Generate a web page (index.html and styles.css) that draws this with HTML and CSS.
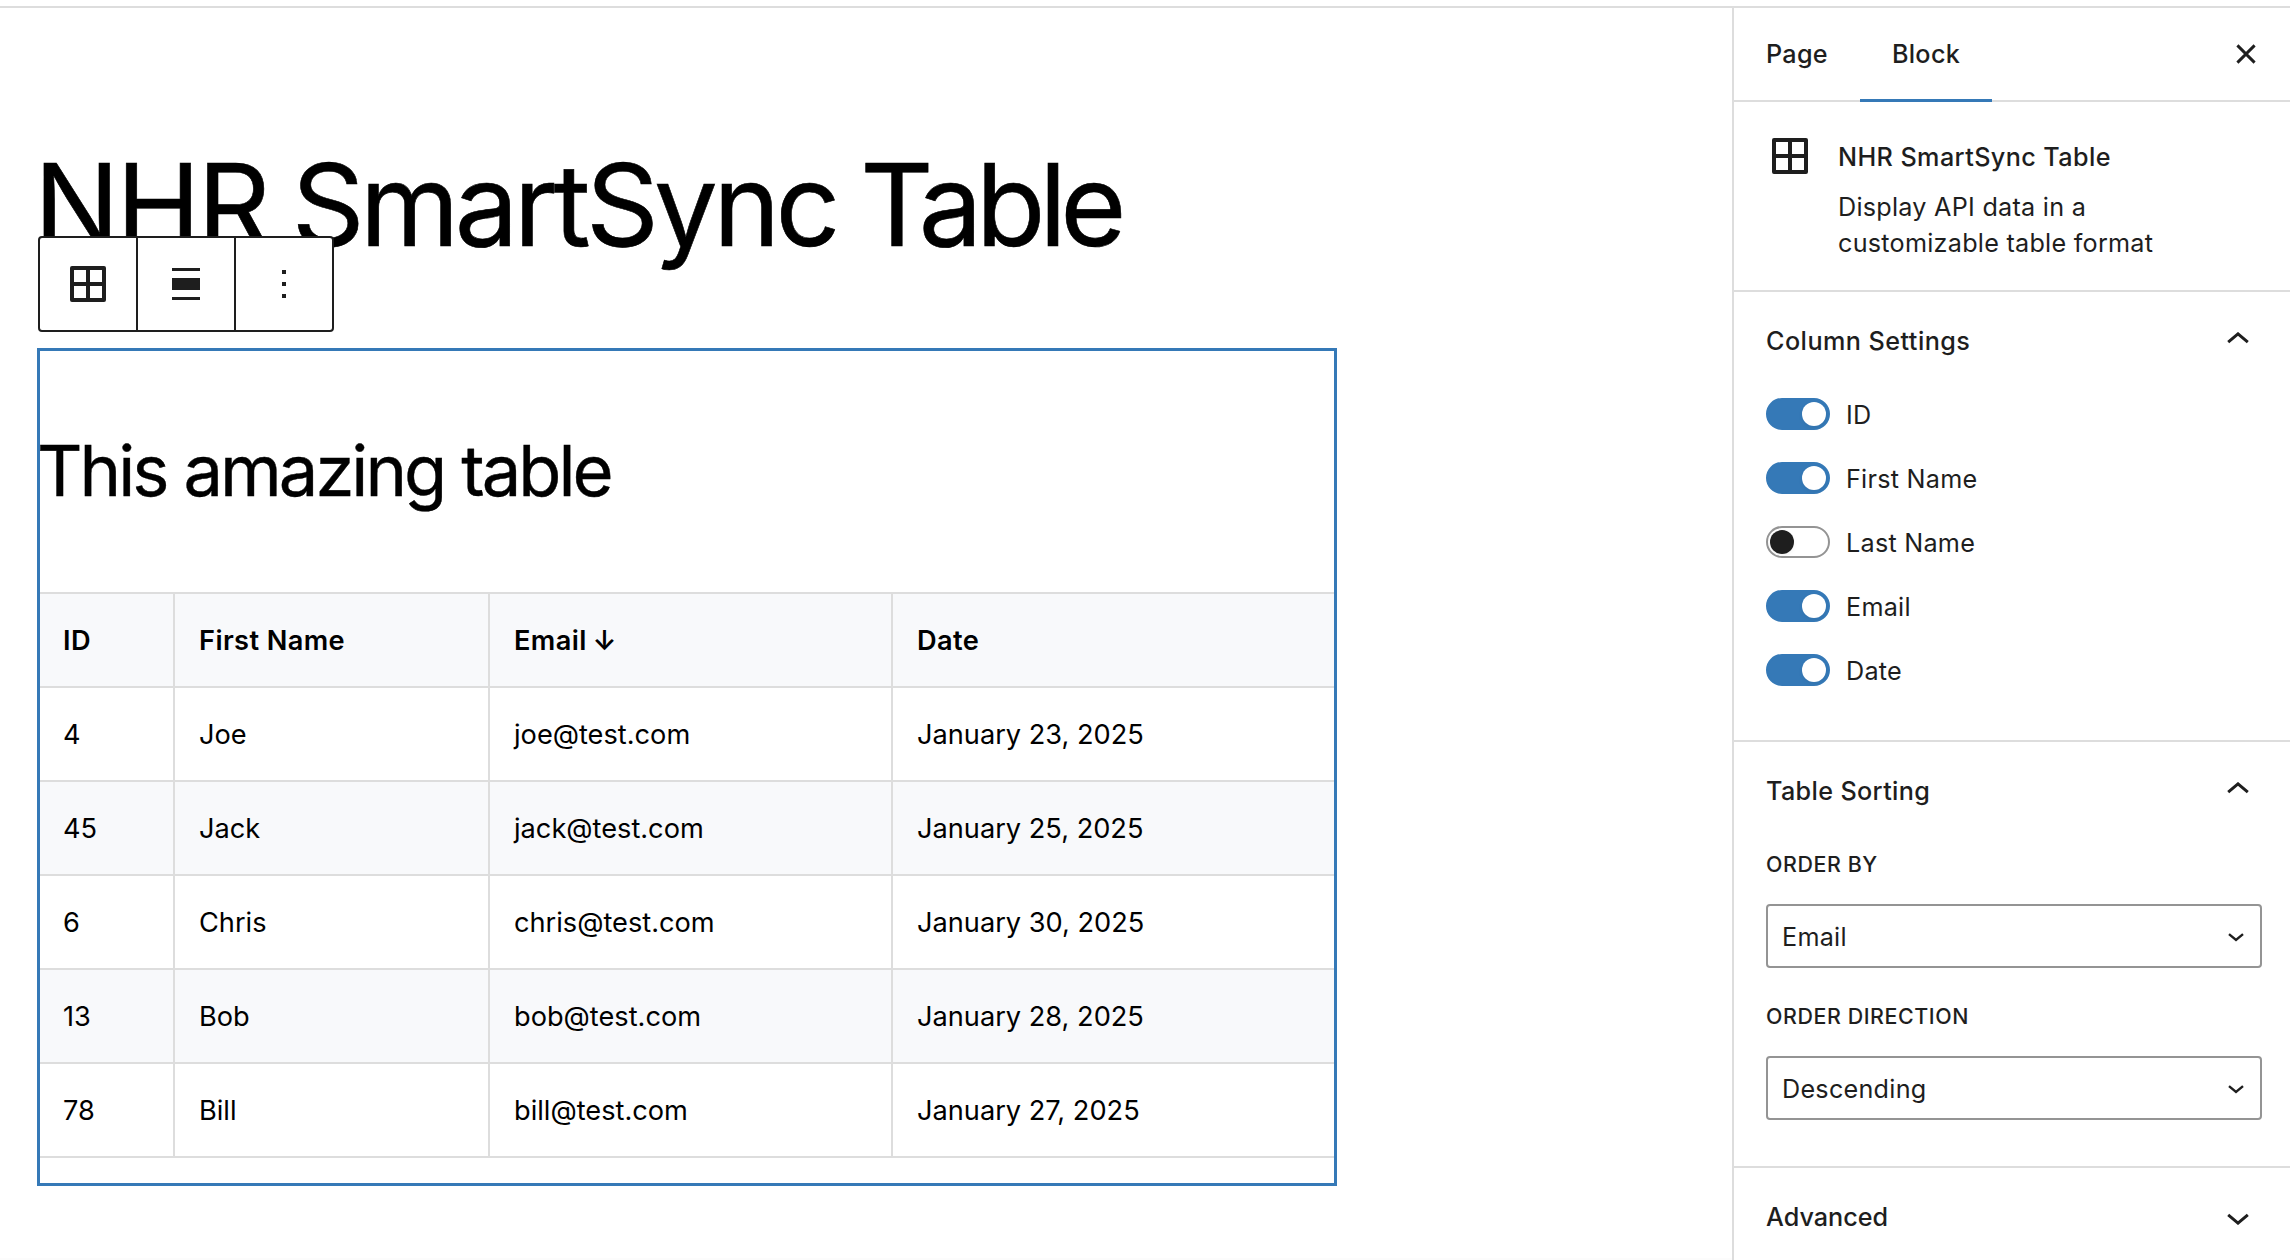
FILE: index.html
```
<!DOCTYPE html>
<html lang="en">
<head>
<meta charset="utf-8">
<title>NHR SmartSync Table</title>
<link rel="stylesheet" href="styles.css">
</head>
<body>
<div class="editor">
  <main class="canvas">
    <h1 class="post-title"><span class="caps">NHR</span> <span class="name">SmartSync</span> <span class="kind">Table</span></h1>
    <div class="block-toolbar">
      <button class="tool" aria-label="Block type">
        <svg width="48" height="48" viewBox="0 0 48 48"><path fill="#1e1e1e" fill-rule="evenodd" d="M8 6h32a2 2 0 0 1 2 2v32a2 2 0 0 1-2 2H8a2 2 0 0 1-2-2V8a2 2 0 0 1 2-2zM10 10v12h12V10zM26 10v12h12V10zM10 26v12h12V26zM26 26v12h12V26z"/></svg>
      </button>
      <button class="tool" aria-label="Align">
        <svg width="48" height="48" viewBox="0 0 48 48"><path fill="#1e1e1e" d="M10 8h28v3H10zM10 18h28v12H10zM10 37h28v3H10z"/></svg>
      </button>
      <button class="tool" aria-label="Options">
        <svg width="48" height="48" viewBox="0 0 48 48"><path fill="#1e1e1e" d="M22 10h4v4h-4zM22 22h4v4h-4zM22 34h4v4h-4z"/></svg>
      </button>
    </div>
    <section class="block">
      <h2 class="block-title">This amazing table</h2>
      <table class="data">
        <colgroup><col class="c-id"><col class="c-name"><col class="c-email"><col class="c-date"></colgroup>
        <thead><tr><th>ID</th><th>First Name</th><th>Email <span class="arrow">↓</span></th><th>Date</th></tr></thead>
        <tbody>
          <tr><td>4</td><td>Joe</td><td>joe@test.com</td><td>January 23, 2025</td></tr>
          <tr><td>45</td><td>Jack</td><td>jack@test.com</td><td>January 25, 2025</td></tr>
          <tr><td>6</td><td>Chris</td><td>chris@test.com</td><td>January 30, 2025</td></tr>
          <tr><td>13</td><td>Bob</td><td>bob@test.com</td><td>January 28, 2025</td></tr>
          <tr><td>78</td><td>Bill</td><td>bill@test.com</td><td>January 27, 2025</td></tr>
        </tbody>
      </table>
    </section>
  </main>
  <aside class="sidebar">
    <header class="tabs">
      <button class="tab">Page</button>
      <button class="tab active">Block</button>
      <button class="close" aria-label="Close">
        <svg width="20" height="20" viewBox="0 0 20 20"><path d="M1.4 1.4l17.2 17.2M18.6 1.4L1.4 18.6" fill="none" stroke="#1e1e1e" stroke-width="2.9"/></svg>
      </button>
    </header>
    <section class="card">
      <svg class="card-icon" width="48" height="48" viewBox="0 0 48 48"><path fill="#1e1e1e" fill-rule="evenodd" d="M8 6h32a2 2 0 0 1 2 2v32a2 2 0 0 1-2 2H8a2 2 0 0 1-2-2V8a2 2 0 0 1 2-2zM10 10v12h12V10zM26 10v12h12V10zM10 26v12h12V26zM26 26v12h12V26z"/></svg>
      <div>
        <h3 class="card-title">NHR SmartSync Table</h3>
        <p class="card-text">Display API data in a<br>customizable table format</p>
      </div>
    </section>
    <section class="panel">
      <h3 class="panel-title wide">Column Settings
        <svg class="up" width="22" height="12" viewBox="0 0 22 12"><path d="M1.2 10.2L11 1.9l9.8 8.3" fill="none" stroke="#1e1e1e" stroke-width="3"/></svg>
      </h3>
      <div class="toggles">
        <label class="row"><span class="toggle on"></span>ID</label>
        <label class="row"><span class="toggle on"></span>First Name</label>
        <label class="row"><span class="toggle"></span>Last Name</label>
        <label class="row"><span class="toggle on"></span>Email</label>
        <label class="row"><span class="toggle on"></span>Date</label>
      </div>
    </section>
    <section class="panel">
      <h3 class="panel-title">Table Sorting
        <svg class="up" width="22" height="12" viewBox="0 0 22 12"><path d="M1.2 10.2L11 1.9l9.8 8.3" fill="none" stroke="#1e1e1e" stroke-width="3"/></svg>
      </h3>
      <div class="fields">
        <div class="field-label">Order by</div>
        <div class="select">Email
          <svg width="16" height="9" viewBox="0 0 16 9"><path d="M1 1.2l7 5.8 7-5.8" fill="none" stroke="#1e1e1e" stroke-width="2.4"/></svg>
        </div>
        <div class="field-label">Order direction</div>
        <div class="select">Descending
          <svg width="16" height="9" viewBox="0 0 16 9"><path d="M1 1.2l7 5.8 7-5.8" fill="none" stroke="#1e1e1e" stroke-width="2.4"/></svg>
        </div>
      </div>
    </section>
    <section class="panel last">
      <h3 class="panel-title tight">Advanced
        <svg class="down" width="22" height="12" viewBox="0 0 22 12"><path d="M1.2 1.8L11 10.1l9.8-8.3" fill="none" stroke="#1e1e1e" stroke-width="3"/></svg>
      </h3>
    </section>
  </aside>
</div>
</body>
</html>
```
FILE: styles.css
```
* { box-sizing: border-box; }

body {
  margin: 0;
  height: 1260px;
  padding-top: 6px;
  overflow: hidden;
  background: #fff;
  color: #000;
  font-family: Inter, "Liberation Sans", sans-serif;
}

h1, h2, h3, p { margin: 0; font-weight: 400; }

button {
  margin: 0;
  padding: 0;
  border: 0;
  background: none;
  font: inherit;
  color: inherit;
}

svg { display: block; flex: none; }

.editor {
  display: grid;
  grid-template-columns: 1732px 1fr;
  height: 1254px;
  border-top: 2px solid #ddd;
}

/* Canvas */
.canvas {
  padding: 129px 0 0 37px;
  background: linear-gradient(#fcfcfc, #fcfcfc) bottom / 100% 8px no-repeat;
}

.post-title {
  height: 99px;
  line-height: 136px;
  font-size: 113.5px;
  letter-spacing: -5.4px;
  margin-left: -3px;
  white-space: nowrap;
  -webkit-text-stroke: 0.6px #000;
}

.post-title .caps { letter-spacing: -3.2px; }
.post-title .name { letter-spacing: -4.7px; }
.post-title .kind { letter-spacing: -6.4px; margin-left: -2px; }
.post-title .name { margin-left: -2px; }

.block-toolbar {
  position: relative;
  display: flex;
  width: 296px;
  height: 96px;
  margin: 0 0 16px 1px;
  border: 2px solid #1e1e1e;
  border-radius: 4px;
  background: #fff;
}

.tool {
  display: flex;
  flex: 0 0 98px;
  align-items: center;
  justify-content: center;
  border-right: 2px solid #1e1e1e;
}

.tool:last-child { flex-basis: 96px; border-right: 0; }

.block {
  width: 1300px;
  height: 838px;
  border: 3px solid #3579b7;
}

.block-title {
  padding-top: 77px;
  height: 241px;
  line-height: 85px;
  font-size: 70.5px;
  letter-spacing: -2.98px;
  text-indent: -3px;
  -webkit-text-stroke: 0.4px #000;
}

.data {
  width: 1294px;
  table-layout: fixed;
  border-collapse: separate;
  border-spacing: 0;
  border-top: 2px solid #ddd;
  font-size: 27.2px;
}

.c-id { width: 135px; }
.c-name { width: 315px; }
.c-email { width: 403px; }

.data th, .data td {
  height: 94px;
  padding: 0 24px;
  border-right: 2px solid #ddd;
  border-bottom: 2px solid #ddd;
  text-align: left;
  vertical-align: middle;
  white-space: nowrap;
}

.data th { font-weight: 600; letter-spacing: 0.4px; background: #f8f9fb; }
.data tbody tr:nth-child(even) { background: #f8f9fb; }
.data th:first-child, .data td:first-child { padding-left: 23px; }
.data th:last-child, .data td:last-child { border-right: 0; }
.arrow { margin-left: -1.5px; }

/* Sidebar */
.sidebar {
  border-left: 2px solid #ddd;
  background: #fff;
  color: #1e1e1e;
  font-size: 25.2px;
  letter-spacing: 0.25px;
}

.tabs {
  display: flex;
  height: 94px;
  border-bottom: 2px solid #ddd;
}

.tab {
  height: 94px;
  padding: 0 32px 2px;
  font-weight: 500;
  letter-spacing: 0.3px;
}

.tab:first-child { width: 126px; padding-right: 33px; }
.tab.active { width: 132px; padding: 0 0 0; border-bottom: 3px solid #3579b7; }

.close { margin: -1px 34px 0 auto; }

.card {
  display: flex;
  gap: 24px;
  height: 190px;
  padding: 30px 32px 0;
  border-bottom: 2px solid #ddd;
}

.card-title {
  margin-top: 7px;
  font-size: 25.2px;
  line-height: 36px;
  font-weight: 500;
  letter-spacing: 0.4px;
}

.card-text { margin-top: 14px; line-height: 36px; }

.panel { border-bottom: 2px solid #ddd; }
.panel.last { border-bottom: 0; }

.panel-title {
  display: flex;
  align-items: center;
  justify-content: space-between;
  height: 98px;
  padding: 0 41px 0 32px;
  font-size: 25.2px;
  font-weight: 500;
  letter-spacing: 0.35px;
}

.panel-title.wide { letter-spacing: 0.45px; }
.panel-title.tight { letter-spacing: 0; }
.panel-title .up { margin-top: -6px; }
.panel-title .down { margin-top: 3px; }

.toggles {
  display: grid;
  gap: 32px;
  padding: 8px 32px 54px;
}

.row {
  display: flex;
  gap: 16px;
  height: 32px;
  line-height: 34px;
}

.toggle {
  display: flex;
  width: 64px;
  height: 32px;
  padding: 2px;
  border: 2px solid #949494;
  border-radius: 16px;
}

.toggle::before {
  content: "";
  width: 24px;
  height: 24px;
  border-radius: 50%;
  background: #1e1e1e;
  box-shadow: 0 2px 4px rgba(0, 0, 0, 0.05);
}

.toggle.on {
  justify-content: flex-end;
  border-color: #3579b7;
  background: #3579b7;
}

.toggle.on::before { background: #fff; }

.fields { height: 326px; padding: 10px 28px 0 32px; }

.field-label {
  height: 54px;
  line-height: 28px;
  font-size: 21.4px;
  font-weight: 500;
  letter-spacing: 0.58px;
  text-transform: uppercase;
}

.select {
  display: flex;
  align-items: center;
  justify-content: space-between;
  height: 64px;
  margin-bottom: 34px;
  padding: 2px 16px 0 14px;
  border: 2px solid #949494;
  border-radius: 4px;
}
```
